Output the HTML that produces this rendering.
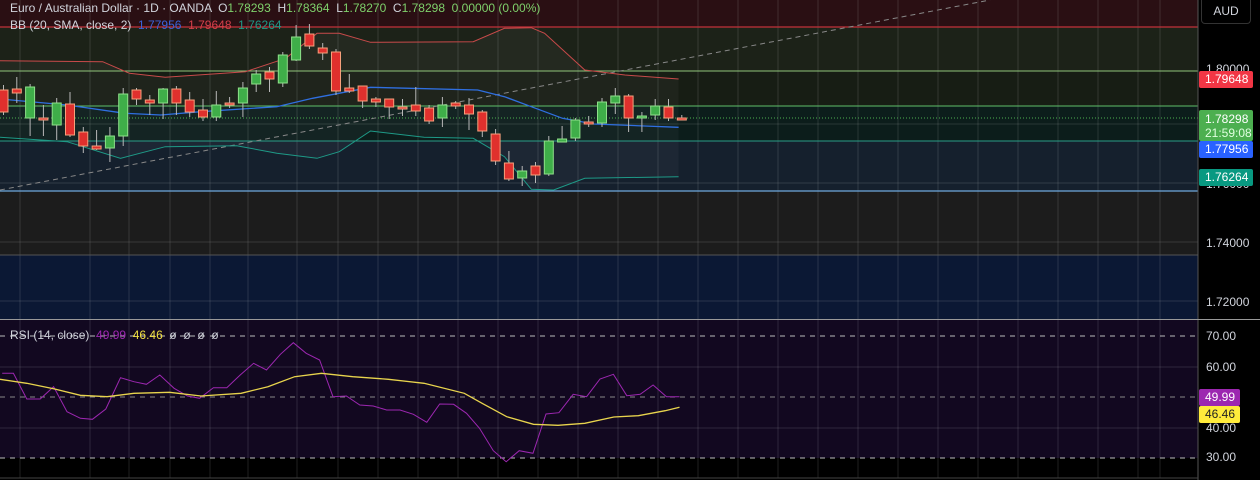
<!DOCTYPE html>
<html><head><meta charset="utf-8"><style>
html,body{margin:0;padding:0;background:#000;width:1260px;height:480px;overflow:hidden;font-family:"Liberation Sans",sans-serif}
.t{position:absolute;font-size:12px;white-space:nowrap}
.lb{position:absolute;left:1199px;width:54px;height:17px;border-radius:2px;font-size:12px;line-height:17px;padding-left:6px;box-sizing:border-box;color:#fff}
.ax{position:absolute;left:1206px;font-size:12px;color:#d1d4dc}
</style></head><body>
<svg id="s" width="1260" height="480" style="position:absolute;left:0;top:0">
<rect x="0" y="0" width="1198" height="27" fill="#2a0f13"/>
<rect x="0" y="27" width="1198" height="44" fill="#1c2218"/>
<rect x="0" y="71" width="1198" height="35" fill="#171d14"/>
<rect x="0" y="106" width="1198" height="35" fill="#0c1d1b"/>
<rect x="0" y="141" width="1198" height="50" fill="#15202d"/>
<rect x="0" y="191" width="1198" height="64" fill="#1c1c1c"/>
<rect x="0" y="255" width="1198" height="64" fill="#0b1834"/>
<rect x="0" y="320" width="1198" height="138" fill="#120820"/>
<g id="grid" stroke="#ffffff" stroke-opacity="0.12" stroke-width="1"></g>
<path id="fill" fill="#ffffff" fill-opacity="0.035"/>
<line x1="0" y1="27" x2="1198" y2="27" stroke="#c2313a" stroke-width="1.2"/>
<line x1="0" y1="71" x2="1198" y2="71" stroke="#8fc47a" stroke-width="1"/>
<line x1="0" y1="106" x2="1198" y2="106" stroke="#5fbf6a" stroke-width="1"/>
<line x1="0" y1="141" x2="1198" y2="141" stroke="#2a9d88" stroke-width="1"/>
<line x1="0" y1="191" x2="1198" y2="191" stroke="#6fa8dc" stroke-width="1.2"/>
<line x1="0" y1="255" x2="1198" y2="255" stroke="#555" stroke-width="1"/>
<line x1="0" y1="118" x2="1198" y2="118" stroke="#4caf50" stroke-dasharray="1 2" stroke-width="1"/>
<line x1="0" y1="190" x2="990" y2="0" stroke="#888" stroke-dasharray="5 4" stroke-width="1"/>
<polyline id="up" fill="none" stroke="#c84a4a" stroke-width="1"/>
<polyline id="mid" fill="none" stroke="#2f6fe0" stroke-width="1.3"/>
<polyline id="lo" fill="none" stroke="#1e9a87" stroke-width="1"/>
<g id="c"></g>
<line x1="0" y1="336" x2="1198" y2="336" stroke="#bbb" stroke-dasharray="5 5"/>
<line x1="0" y1="397" x2="1198" y2="397" stroke="#888" stroke-dasharray="5 5"/>
<line x1="0" y1="458" x2="1198" y2="458" stroke="#bbb" stroke-dasharray="5 5"/>
<polyline id="rsi" fill="none" stroke="#9c27b0" stroke-width="1"/>
<polyline id="ma" fill="none" stroke="#e8d44d" stroke-width="1.3"/>
<line x1="1198" y1="0" x2="1198" y2="480" stroke="#555"/>
<line x1="0" y1="319.5" x2="1260" y2="319.5" stroke="#999"/>
<line x1="0" y1="478" x2="1198" y2="478" stroke="#444"/>
</svg>
<div class="t" style="left:10px;top:1px;color:#d1d4dc">Euro / Australian Dollar · 1D · OANDA &nbsp;O<span style="color:#7fd16b">1.78293</span> &nbsp;H<span style="color:#7fd16b">1.78364</span> &nbsp;L<span style="color:#7fd16b">1.78270</span> &nbsp;C<span style="color:#7fd16b">1.78298</span> &nbsp;<span style="color:#7fd16b">0.00000 (0.00%)</span></div>
<div class="t" style="left:10px;top:18px;color:#d1d4dc">BB (20, SMA, close, 2) &nbsp;<span style="color:#3a63d8">1.77956</span> &nbsp;<span style="color:#d6404a">1.79648</span> &nbsp;<span style="color:#1e9a87">1.76264</span></div>
<div class="t" style="left:10px;top:328px;color:#d1d4dc">RSI (14, close) &nbsp;<span style="color:#9c27b0">49.99</span> &nbsp;<span style="color:#f0e040">46.46</span> &nbsp;ø &nbsp;ø &nbsp;ø &nbsp;ø</div>
<div style="position:absolute;left:1201px;top:0;width:48px;height:23px;border:1px solid #333;border-top:none;border-radius:0 0 4px 4px;color:#d1d4dc;font-size:12px;line-height:22px;text-align:center">AUD</div>
<div class="ax" style="top:62px">1.80000</div>
<div class="ax" style="top:177px">1.76000</div>
<div class="ax" style="top:236px">1.74000</div>
<div class="ax" style="top:295px">1.72000</div>
<div class="ax" style="top:329px">70.00</div>
<div class="ax" style="top:360px">60.00</div>
<div class="ax" style="top:421px">40.00</div>
<div class="ax" style="top:450px">30.00</div>
<div class="lb" style="top:71px;background:#f23645">1.79648</div>
<div class="lb" style="top:110px;height:31px;line-height:14px;padding-top:2px;background:#4caf50">1.78298<br><span style="color:#dfffdf">21:59:08</span></div>
<div class="lb" style="top:141px;background:#2962ff">1.77956</div>
<div class="lb" style="top:169px;background:#089981">1.76264</div>
<div class="lb" style="top:389px;width:41px;background:#9c27b0">49.99</div>
<div class="lb" style="top:406px;width:41px;background:#ffeb3b;color:#222">46.46</div>
<script>
const NS="http://www.w3.org/2000/svg";
function el(p,t,a){const e=document.createElementNS(NS,t);for(const k in a)e.setAttribute(k,a[k]);document.getElementById(p).appendChild(e);return e;}
[20,90,129,170,210,248,297,338,378,418,458,498,538,578,618,658,698,738,778,818,858,898,938,978,1018,1058,1098,1138,1160].forEach(x=>{el("grid","line",{x1:x,y1:0,x2:x,y2:478});});
[124,183,242,301,367,428].forEach(y=>{el("grid","line",{x1:0,y1:y,x2:1198,y2:y});});
const C=[[90,112,85,115],[89,93,77,103],[118,87,84,136],[118,118,105,136],[125,103,98,140],[104,135,92,137],[132,146,127,153],[146,149,130,150],[148,136,127,162],[136,94,88,146],[90,99,88,105],[100,103,95,115],[103,89,88,119],[89,103,86,115],[100,112,92,117],[110,117,99,121],[117,105,91,121],[103,103,97,108],[103,88,82,117],[84,74,70,92],[72,79,67,92],[83,55,52,87],[60,37,25,61],[34,46,24,49],[48,53,43,60],[52,91,49,95],[88,91,74,93],[86,101,86,108],[99,102,97,107],[99,107,99,119],[107,107,99,116],[105,111,87,116],[108,121,105,124],[118,105,97,127],[103,106,101,109],[105,114,98,130],[112,131,110,137],[134,161,129,165],[163,179,151,181],[178,171,166,186],[166,175,162,183],[174,141,136,176],[142,139,126,141],[138,120,118,141],[122,122,116,127],[123,102,98,127],[103,96,88,114],[96,118,94,132],[118,116,112,132],[115,106,99,120],[107,118,99,121],[118,118,115,119]];
C.forEach((c,i)=>{const x=3.5+13.3*i;const [o,cl,h,l]=c;
el("c","line",{x1:x,y1:h,x2:x,y2:l,stroke:"#b8b8b8","stroke-width":1});
const up=cl<o||(cl==o&&0);const top=Math.min(o,cl),ht=Math.max(2,Math.abs(o-cl));
el("c","rect",{x:x-4.5,y:top,width:9,height:ht,fill:cl==o?"#e0302d":(up?"#3fae49":"#e0302d"),stroke:cl==o?"#f0a080":(up?"#8fe08a":"#f6a07c"),"stroke-width":1});});
function P(a,sx,sy,oy){return a.map(p=>(p[0]/sx).toFixed(1)+","+(p[1]/sy+oy).toFixed(1)).join(" ");}
const U=[[0,182],[230,185],[290,220],[370,232],[550,215],[640,175],[710,100],[760,100],[830,127],[1060,125],[1130,85],[1190,83],[1220,100],[1310,210],[1400,225],[1520,237]];
const M=[[0,297],[150,315],[280,340],[360,345],[450,335],[620,320],[700,295],[830,262],[920,265],[1070,270],[1130,290],[1190,320],[1260,355],[1330,372],[1520,382]];
const L=[[0,412],[150,425],[270,475],[370,440],[530,437],[620,460],[710,475],[760,455],[830,393],[950,412],[1060,415],[1130,470],[1190,568],[1240,570],[1310,535],[1520,530]];
document.getElementById("up").setAttribute("points",P(U,2.24,3,0));
document.getElementById("mid").setAttribute("points",P(M,2.24,3,0));
document.getElementById("lo").setAttribute("points",P(L,2.24,3,0));
document.getElementById("fill").setAttribute("d","M"+P(U,2.24,3,0)+" L"+P(L.slice().reverse(),2.24,3,0)+"Z");
const R=[[5,160],[30,160],[60,237],[90,237],[120,200],[150,275],[180,295],[207,298],[237,267],[270,173],[300,185],[328,193],[358,165],[390,205],[420,228],[447,235],[478,203],[508,203],[538,165],[568,130],[597,150],[628,103],[657,68],[686,100],[716,120],[746,230],[776,228],[806,255],[836,258],[866,270],[896,270],[926,283],[956,307],[985,252],[1016,253],[1045,280],[1074,325],[1105,392],[1134,425],[1163,392],[1194,400],[1223,282],[1252,278],[1284,223],[1314,230],[1344,177],[1374,163],[1404,227],[1434,223],[1463,195],[1493,230],[1522,230]];
const MA=[[0,178],[60,190],[120,206],[180,226],[240,230],[300,220],[380,217],[450,228],[540,220],[600,200],[660,170],[720,160],[790,170],[870,178],[950,190],[1040,220],[1080,250],[1135,290],[1195,313],[1250,316],[1310,310],[1375,291],[1430,287],[1490,272],[1522,262]];
document.getElementById("rsi").setAttribute("points",P(R,2.24,3,320));
document.getElementById("ma").setAttribute("points",P(MA,2.24,3,320));
</script>
</body></html>
